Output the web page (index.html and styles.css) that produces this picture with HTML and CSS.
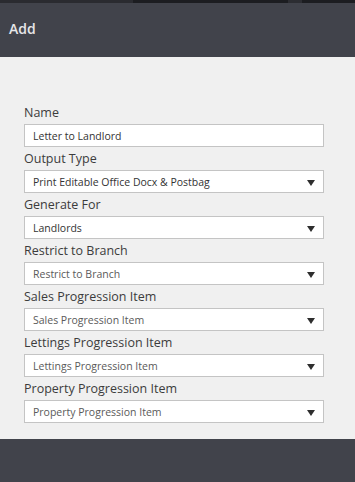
FILE: index.html
```html
<!DOCTYPE html>
<html>
<head>
<meta charset="utf-8">
<link rel="stylesheet" href="styles.css">
</head>
<body>
<div class="topstrip"><div class="strip-left"></div><div class="strip-right"><div class="strip-mark"></div></div></div>
<header class="header"><h1 class="title">Add</h1></header>
<main class="content">
  <form class="form">
    <div class="field">
      <label class="label">Name</label>
      <div class="input"><span class="value">Letter to Landlord</span></div>
    </div>
    <div class="field">
      <label class="label">Output Type</label>
      <div class="input select"><span class="value">Print Editable Office Docx &amp; Postbag</span><span class="arrow"></span></div>
    </div>
    <div class="field">
      <label class="label">Generate For</label>
      <div class="input select"><span class="value">Landlords</span><span class="arrow"></span></div>
    </div>
    <div class="field">
      <label class="label">Restrict to Branch</label>
      <div class="input select"><span class="value placeholder">Restrict to Branch</span><span class="arrow"></span></div>
    </div>
    <div class="field">
      <label class="label">Sales Progression Item</label>
      <div class="input select"><span class="value placeholder">Sales Progression Item</span><span class="arrow"></span></div>
    </div>
    <div class="field">
      <label class="label">Lettings Progression Item</label>
      <div class="input select"><span class="value placeholder">Lettings Progression Item</span><span class="arrow"></span></div>
    </div>
    <div class="field">
      <label class="label">Property Progression Item</label>
      <div class="input select"><span class="value placeholder">Property Progression Item</span><span class="arrow"></span></div>
    </div>
  </form>
</main>
<footer class="footer"></footer>
</body>
</html>
```
FILE: styles.css
```css
* { box-sizing: border-box; }
html, body { margin: 0; padding: 0; }
body {
  width: 355px;
  height: 482px;
  overflow: hidden;
  background: #41434b;
  font-family: "Open Sans", "Noto Sans", sans-serif;
}
.topstrip {
  height: 3px;
  display: flex;
}
.strip-left { width: 133px; background: #2a2b30; }
.strip-right { flex: 1; background: #1c1d21; display: flex; padding-left: 155px; }
.strip-mark { width: 14px; background: #2c2d32; }
.header {
  height: 54px;
  background: #41434b;
  display: flex;
  align-items: center;
  padding-left: 9px;
}
.title {
  margin: 0 0 3px 0;
  font-size: 14px;
  font-weight: 600;
  color: #e6e6e8;
}
.content {
  background: #f0f0f0;
  height: 382px;
  padding: 44px 0 0 24px;
}
.form {
  width: 300px;
  display: flex;
  flex-direction: column;
}
.field {
  display: flex;
  flex-direction: column;
  height: 46px;
}
.label {
  height: 23px;
  font-size: 12.5px;
  color: #3c3c3c;
  line-height: 23px;
}
.input {
  height: 23px;
  background: #ffffff;
  border: 1px solid #c4c4c4;
  display: flex;
  align-items: center;
  padding: 0 8px 0 8px;
}
.value {
  flex: 1;
  font-size: 10.5px;
  color: #333333;
  white-space: nowrap;
}
.placeholder { color: #5a5a5a; }
.arrow {
  width: 0;
  height: 0;
  border-left: 4px solid transparent;
  border-right: 4px solid transparent;
  border-top: 6px solid #2e2e2e;
  margin-top: 2px;
}
.footer {
  height: 43px;
  background: #41434b;
}
```
